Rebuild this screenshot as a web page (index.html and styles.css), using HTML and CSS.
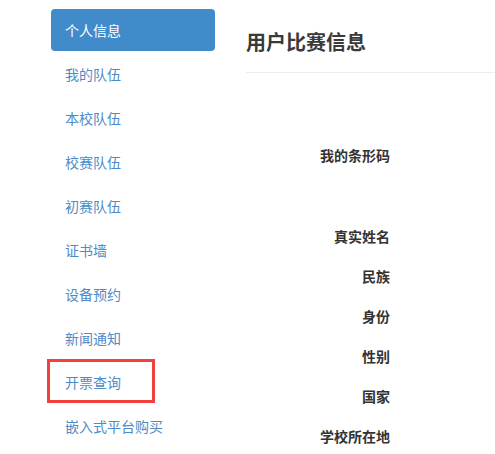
FILE: index.html
```html
<!DOCTYPE html>
<html lang="zh-CN">
<head>
<meta charset="utf-8">
<title>用户比赛信息</title>
<link rel="stylesheet" href="styles.css">
</head>
<body>
<div class="page">
  <nav class="sidebar">
    <a class="item active">个人信息</a>
    <a class="item">我的队伍</a>
    <a class="item">本校队伍</a>
    <a class="item">校赛队伍</a>
    <a class="item">初赛队伍</a>
    <a class="item">证书墙</a>
    <a class="item">设备预约</a>
    <a class="item">新闻通知</a>
    <a class="item marked">开票查询<span class="highlight"></span></a>
    <a class="item">嵌入式平台购买</a>
  </nav>
  <main class="main">
    <h3 class="title">用户比赛信息</h3>
    <div class="fields">
      <div class="label barcode">我的条形码</div>
      <div class="label first">真实姓名</div>
      <div class="label">民族</div>
      <div class="label">身份</div>
      <div class="label">性别</div>
      <div class="label">国家</div>
      <div class="label">学校所在地</div>
    </div>
  </main>
</div>
</body>
</html>
```
FILE: styles.css
```css
html, body {
  margin: 0;
  padding: 0;
  background: #fff;
}
body {
  font-family: "Noto Sans CJK SC", "Noto Sans", sans-serif;
  font-size: 14px;
  color: #333;
}
.page {
  display: flex;
  padding-top: 9px;
}
.sidebar {
  margin-left: 51px;
  width: 164px;
  display: flex;
  flex-direction: column;
  gap: 2px;
}
.item {
  position: relative;
  display: block;
  height: 42px;
  line-height: 42px;
  padding: 0 14px;
  color: #4f8bc6;
  text-decoration: none;
  border-radius: 4px;
}
.item.active {
  background: #418bca;
  color: #fff;
}
.highlight {
  position: absolute;
  left: -4px;
  top: -2px;
  width: 102px;
  height: 38px;
  border: 3px solid #f2403f;
}
.main {
  flex: 1;
  margin-left: 31px;
}
.title {
  margin: 0;
  padding-top: 19px;
  padding-bottom: 16px;
  line-height: 28px;
  font-size: 20px;
  font-weight: bold;
  color: #3a3a3a;
  border-bottom: 1px solid #ececec;
}
.fields {
  display: flex;
  flex-direction: column;
  gap: 20px;
  width: 144px;
}
.label {
  text-align: right;
  font-weight: bold;
  line-height: 20px;
  color: #333;
}
.label.barcode {
  margin-top: 72px;
}
.label.first {
  margin-top: 41px;
}
```
